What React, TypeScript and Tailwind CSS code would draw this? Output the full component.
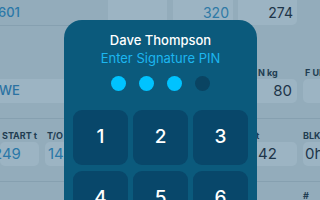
import React from "react";

const field = "bg-[#9cb4c3] rounded-[5px] h-[24px] flex items-center";
const label = "h-[12px] text-[9px] leading-[12px] font-bold text-[#213d52] whitespace-nowrap";

const KEYS = ["1", "2", "3", "4", "5", "6", "7", "8", "9"];

/** 一个表单格：标签 + 输入框 */
function Cell({
  w,
  ml = 0,
  title,
  titlePad = 0,
  children,
  boxClass = "",
}: {
  w: number;
  ml?: number;
  title?: string;
  titlePad?: number;
  children?: React.ReactNode;
  boxClass?: string;
}) {
  return (
    <div className="shrink-0 flex flex-col" style={{ width: w, marginLeft: ml }}>
      <div className={label} style={{ paddingLeft: titlePad }}>
        {title}
      </div>
      <div className={`${field} ${boxClass}`}>{children}</div>
    </div>
  );
}

/** 背景中被遮罩压暗的表单 */
function Form() {
  return (
    <div className="w-[320px] h-[200px] bg-[#93acbb] flex flex-col">
      {/* 第一行 */}
      <div className="h-[26px] flex shrink-0">
        <div className="w-[108px] shrink-0 h-[26px] border-b border-[#86a0b0] flex items-center">
          <span className="text-[13px] font-medium text-[#2b78a8] -ml-[2px]">601</span>
        </div>
        <div className="w-[59px] shrink-0 h-[25px] bg-[#9cb4c3] rounded-b-[5px]" />
        <div className="w-[60px] shrink-0 h-[25px] ml-[6px] bg-[#9cb4c3] rounded-b-[5px] flex items-center justify-end pr-[4px]">
          <span className="text-[14px] text-[#2f7aa6]">320</span>
        </div>
        <div className="w-[59px] shrink-0 h-[25px] ml-[5px] bg-[#9cb4c3] rounded-b-[5px] flex items-center justify-end pr-[4px]">
          <span className="text-[14px] text-[#1e3549]">274</span>
        </div>
      </div>

      {/* 第二行 */}
      <div className="h-[93px] flex pt-[41px] border-b border-[#86a0b0] shrink-0">
        <Cell w={230} boxClass="bg-[#9ab2c1] rounded-l-none">
          <span className="text-[13px] font-medium text-[#2b72a2] -ml-[1px]">WE</span>
        </Cell>
        <Cell w={59} ml={8} title="N kg" titlePad={20} boxClass="justify-end pr-[5px]">
          <span className="text-[15px] text-[#1e3549]">80</span>
        </Cell>
        <Cell w={40} ml={6} title="F UR" titlePad={2} />
      </div>

      {/* 第三行 */}
      <div className="h-[63px] flex pt-[11px] border-b border-[#86a0b0] shrink-0">
        <Cell w={39} title="START t" titlePad={2} boxClass="overflow-hidden">
          <span className="text-[15px] text-[#2b78a8] -ml-[7px]">249</span>
        </Cell>
        <Cell w={187} ml={6} title="T/O" titlePad={2} boxClass="pl-[3px]">
          <span className="text-[15px] text-[#2b78a8]">14</span>
        </Cell>
        <Cell w={59} ml={6} title="t" titlePad={18} boxClass="pl-[20px]">
          <span className="text-[15px] text-[#1e3549]">42</span>
        </Cell>
        <Cell w={40} ml={6} title="BLK" boxClass="pl-[2px]">
          <span className="text-[15px] text-[#1e3549]">0h</span>
        </Cell>
      </div>

      {/* 第四行 */}
      <div className="flex pt-[8px]">
        <div className="w-[303px] shrink-0" />
        <span className={label}>#</span>
      </div>
    </div>
  );
}

export default function App() {
  const filled = 3;

  return (
    <div className="relative w-[320px] h-[200px] overflow-hidden font-['Inter','Noto_Sans',sans-serif]">
      <Form />

      {/* ── PIN 面板（浮层） ── */}
      <div className="absolute left-[64px] top-[20px] w-[193px] h-[230px] bg-[#0b5a7c] rounded-t-[18px] flex flex-col items-center pt-[12px]">
        <div className="h-[16px] text-[13px] leading-[16px] font-medium text-white">
          Dave Thompson
        </div>
        <div className="h-[16px] mt-[2px] text-[13px] leading-[16px] text-[#1cb6f0]">
          Enter Signature PIN
        </div>
        <div className="flex gap-[13px] mt-[10px]">
          {[0, 1, 2, 3].map((i) => (
            <span
              key={i}
              className={`w-[15px] h-[15px] rounded-full ${
                i < filled ? "bg-[#00c3ff]" : "bg-[#0a4462]"
              }`}
            />
          ))}
        </div>
        <div className="grid grid-cols-3 gap-x-[5px] gap-y-[6px] mt-[19px]">
          {KEYS.map((k) => (
            <button
              key={k}
              className="w-[55px] h-[55px] rounded-[9px] bg-[#08476a] text-white text-[19px] font-medium flex items-center justify-center"
            >
              {k}
            </button>
          ))}
        </div>
      </div>
    </div>
  );
}
